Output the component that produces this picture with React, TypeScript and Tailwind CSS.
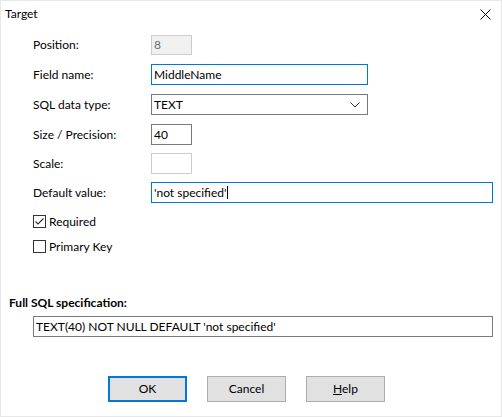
import React from 'react'

const font = { fontFamily: '"Segoe UI", Lato, "Liberation Sans", Arial, sans-serif' }

function Row({ label, children }: { label: string; children: React.ReactNode }) {
  return (
    <div className="flex items-center h-[21px]">
      <div className="w-[118px] shrink-0 text-[12px] text-black">{label}</div>
      {children}
    </div>
  )
}

function Checkbox({ checked, label }: { checked?: boolean; label: string }) {
  return (
    <div className="flex items-center h-[13px]">
      <div className="w-[13px] h-[13px] border border-[#333333] bg-white flex items-center justify-center">
        {checked && (
          <svg width="11" height="11" viewBox="0 0 11 11">
            <path d="M1.5 5.5 L4 8 L9.5 2.5" fill="none" stroke="#333333" strokeWidth="1.2" />
          </svg>
        )}
      </div>
      <span className="ml-[3px] text-[12px] text-black">{label}</span>
    </div>
  )
}

export default function App() {
  return (
    <div style={font} className="w-[502px] h-[417px] bg-white border border-[#e8e8e8] flex flex-col text-black">
      <div className="h-[26px] flex items-center justify-between pl-[4px] pr-[10px]">
        <span className="text-[12px]">Target</span>
        <svg width="11" height="11" viewBox="0 0 11 11">
          <path d="M0.5 0.5 L10.5 10.5 M10.5 0.5 L0.5 10.5" stroke="#000" strokeWidth="1" />
        </svg>
      </div>

      <div className="pl-[32px] pt-[7px] flex flex-col gap-[9px]">
        <Row label="Position:">
          <div className="w-[41px] h-[20px] border border-[#cccccc] bg-[#f0f0f0] text-[12px] text-[#6d6d6d] pl-[2px] leading-[18px]">8</div>
        </Row>
        <Row label="Field name:">
          <div className="w-[217px] h-[21px] border border-[#0078d7] bg-white text-[12px] pl-[2px] leading-[19px]">MiddleName</div>
        </Row>
        <Row label="SQL data type:">
          <div className="w-[217px] h-[21px] border border-[#7a7a7a] bg-white text-[12px] pl-[2px] flex items-center justify-between pr-[7px]">
            <span>TEXT</span>
            <svg width="10" height="6" viewBox="0 0 10 6">
              <path d="M0.5 0.5 L5 5 L9.5 0.5" fill="none" stroke="#333" strokeWidth="1" />
            </svg>
          </div>
        </Row>
        <Row label="Size / Precision:">
          <div className="w-[41px] h-[21px] border border-[#7a7a7a] bg-white text-[12px] pl-[2px] leading-[19px]">40</div>
        </Row>
        <div className="-mt-px">
          <Row label="Scale:">
            <div className="w-[41px] h-[21px] border border-[#cccccc] bg-white" />
          </Row>
        </div>
        <div className="-mt-px">
          <Row label="Default value:">
            <div className="w-[342px] h-[21px] border border-[#0078d7] bg-white text-[12px] pl-[2px] leading-[19px] flex items-center">
              <span>'not specified'</span>
              <span className="w-px h-[13px] bg-black ml-px" />
            </div>
          </Row>
        </div>
        <div className="pt-[3px] flex flex-col gap-[12px]">
          <Checkbox checked label="Required" />
          <Checkbox label="Primary Key" />
        </div>
      </div>

      <div className="mt-[42px] pl-[8px] text-[12px] font-bold leading-[16px]">Full SQL specification:</div>
      <div className="mt-[5px] ml-[32px] w-[460px] h-[21px] border border-[#7a7a7a] bg-white text-[12px] pl-[2px] leading-[19px]">
        TEXT(40) NOT NULL DEFAULT 'not specified'
      </div>

      <div className="mt-[39px] pl-[107px] flex gap-[20px]">
        <button className="w-[79px] h-[26px] border-2 border-[#0078d7] bg-[#e1e1e1] text-[12px]">OK</button>
        <button className="w-[79px] h-[26px] border border-[#adadad] bg-[#e1e1e1] text-[12px]">Cancel</button>
        <button className="w-[79px] h-[26px] border border-[#adadad] bg-[#e1e1e1] text-[12px]">
          <span className="underline">H</span>elp
        </button>
      </div>
    </div>
  )
}
